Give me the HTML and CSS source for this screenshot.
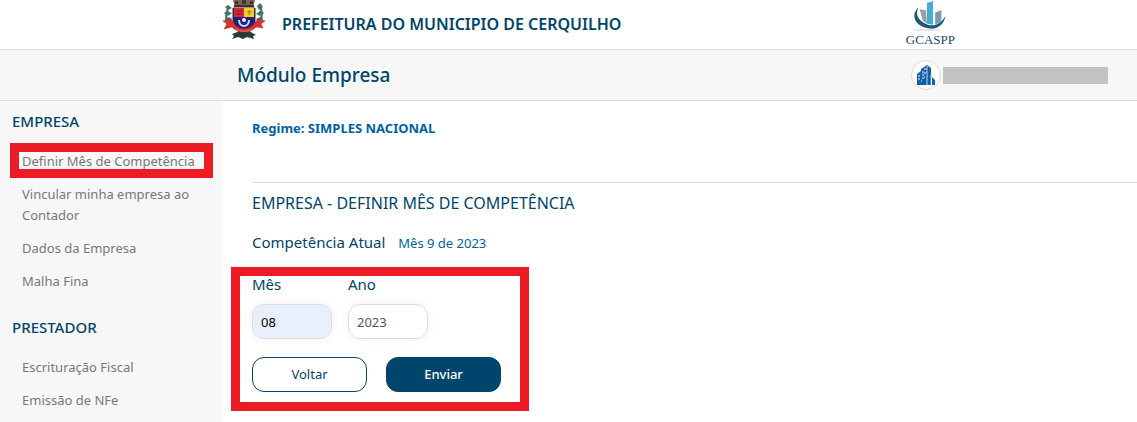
FILE: index.html
```html
<!DOCTYPE html>
<html lang="pt-BR">
<head>
  <meta charset="UTF-8">
  <meta name="viewport" content="width=device-width, initial-scale=1">
  <title>Módulo Empresa</title>
  <link rel="stylesheet" href="styles.css">
</head>
<body>

  <header class="topo">
    <div class="prefeitura">
      <svg class="brasao" viewBox="0 0 44 40" aria-hidden="true">
        <path d="M11 0h22l-2 7H13z" fill="#77664f"/>
        <path d="M13 1h3v3h-3zM20 0h4v4h-4zM28 1h3v3h-3z" fill="#40352e"/>
        <path d="M12 6h20" stroke="#3b302b" stroke-width="2"/>
        <path d="M6 25C3 18 4 13 7 6M37 25c4-7 3-13 1-21" fill="none" stroke="#3d765f" stroke-width="2"/>
        <path d="M6 5l4 3-4 2-3-3zM5 11l5 2-4 3-4-3zM4 17l6 1-4 4-3-2zM38 3l3 4-4 3-2-4zM39 10l3 3-4 3-4-2zM40 16l1 4-4 3-3-4z" fill="#407963"/>
        <path d="M10 34l8-3 4 3 5-3 7 4-3 1 1 3-7-2-4 2-5-2-6 2 2-3z" fill="#263d37"/>
        <path d="M11 8h22v13c0 7-5 11-11 13-6-2-11-6-11-13z" fill="#242078" stroke="#352c42"/>
        <path d="M12 8h10v9H12z" fill="#d92935"/>
        <path d="M22 8h10v9H22z" fill="#f2cf25"/>
        <path d="M14 11h6M14 14h6" stroke="#7b1b2d"/>
        <path d="M27 10v5M25 12h5" stroke="#a47724"/>
        <path d="M17 20c0 8 10 8 10 0" fill="none" stroke="#d5d2ed" stroke-width="2"/>
        <circle cx="22" cy="20" r="2" fill="#eeeeff"/>
        <path d="M1 21l8-2 4 6c5 5 13 5 18 0l5-6 7 2-4 3 2 4-7-1c-6 7-18 7-24 0l-8 2 3-5z" fill="#d53232" stroke="#a72f30" stroke-width=".5"/>
        <path d="M14 29c5 3 11 3 16 0" fill="none" stroke="#f0b8a5" stroke-dasharray="1 1"/>
      </svg>
      <strong class="nome">PREFEITURA DO MUNICIPIO DE CERQUILHO</strong>
    </div>
    <div class="gcaspp">
      <svg class="gcaspp-logo" viewBox="0 0 34 31" aria-hidden="true">
        <ellipse cx="15" cy="29" rx="14" ry="1" fill="#e2e4e5"/>
        <path d="M7 9l6 1 1 13-4-3z" fill="#9b9fa3"/>
        <path d="M14 3l6-2v23l-6-1z" fill="#48add0"/>
        <path d="M22 12l6-2v11l-6 3z" fill="#7e9bac"/>
        <path d="M6 7C-2 14 2 24 13 27c10 3 18-3 19-12-3 7-10 11-17 9C6 21 2 14 6 7z" fill="#155878"/>
      </svg>
      <span>GCASPP</span>
    </div>
  </header>

  <div class="barra">
    <h1>Módulo Empresa</h1>
    <div class="usuario">
      <span class="avatar">
        <svg viewBox="0 0 18 20" aria-hidden="true">
          <path d="M0 20V9l4-3V4l6-4 4 3v17h1v-8l3 3v5z" fill="#1261a8"/>
          <path d="M10 1v19" stroke="#b9d3eb"/>
          <path d="M1 11h2M1 14h2M5 7h2M5 10h2M5 13h2M4 16h1M7 4h2M7 8h2M7 12h1" stroke="#ffffff"/>
          <path d="M14 9v11" stroke="#ffffff" stroke-width=".5"/>
        </svg>
      </span>
      <span class="usuario-nome"></span>
    </div>
  </div>

  <div class="pagina">
    <nav class="menu">
      <h2>EMPRESA</h2>
      <ul>
        <li class="destacado"><a href="#">Definir Mês de Competência</a></li>
        <li><a href="#">Vincular minha empresa ao Contador</a></li>
        <li><a href="#">Dados da Empresa</a></li>
        <li><a href="#">Malha Fina</a></li>
      </ul>
      <h2>PRESTADOR</h2>
      <ul>
        <li><a href="#">Escrituração Fiscal</a></li>
        <li><a href="#">Emissão de NFe</a></li>
      </ul>
    </nav>

    <main class="conteudo">
      <p class="regime">Regime: SIMPLES NACIONAL</p>
      <h2>EMPRESA - DEFINIR MÊS DE COMPETÊNCIA</h2>
      <p class="atual">Competência Atual <span>Mês 9 de 2023</span></p>

      <form class="competencia">
        <div class="campos">
          <div class="campo">
            <label for="mes">Mês</label>
            <input class="preenchido" type="text" id="mes" name="mes" value="08">
          </div>
          <div class="campo">
            <label for="ano">Ano</label>
            <input type="text" id="ano" name="ano" value="2023">
          </div>
        </div>
        <div class="botoes">
          <button type="button">Voltar</button>
          <button type="submit" class="enviar">Enviar</button>
        </div>
      </form>
    </main>
  </div>

</body>
</html>
```

FILE: styles.css
```css
* {
  box-sizing: border-box;
}
body {
  display: flex;
  flex-direction: column;
  min-height: 100vh;
  margin: 0;
  font-family: "Segoe UI", "Noto Sans", "Open Sans", sans-serif;
  font-size: 13px;
  line-height: 21px;
  color: #00456b;
  background: #fff;
}
h1, h2, p, ul {
  margin: 0;
  padding: 0;
}

/* Topo */
.topo {
  display: flex;
  justify-content: space-between;
  height: 50px;
  padding: 0 182px 0 222px;
  border-bottom: 1px solid #ddd;
}
.prefeitura {
  display: flex;
  gap: 16px;
}
.brasao {
  width: 44px;
  height: 40px;
}
.nome {
  font-size: 16px;
  font-weight: 600;
  line-height: 48px;
}
.gcaspp {
  display: flex;
  flex-direction: column;
  align-items: center;
  font-family: "Liberation Serif", serif;
  font-size: 13px;
  line-height: 16px;
  color: #1b4969;
}
.gcaspp-logo {
  width: 36px;
  height: 32px;
}
.barra {
  display: flex;
  align-items: center;
  justify-content: space-between;
  height: 51px;
  padding: 0 29px 0 237px;
  background: #f7f7f7;
  border-bottom: 1px solid #ddd;
}
.barra h1 {
  font-size: 19px;
  font-weight: 500;
}
.usuario {
  display: flex;
  align-items: center;
  gap: 2px;
}
.avatar {
  display: flex;
  align-items: center;
  justify-content: center;
  width: 30px;
  height: 30px;
  border: 1px solid #ddd;
  border-radius: 50%;
  background: #fff;
}
.avatar svg {
  width: 18px;
  height: 20px;
}
.usuario-nome {
  width: 165px;
  height: 17px;
  background: #c3c3c3;
}

/* Menu lateral */
.pagina {
  display: flex;
  flex: 1;
}
.menu {
  flex: 0 0 222px;
  padding: 8px 9px 0 12px;
  background: #f7f7f7;
}
.menu h2 {
  margin-bottom: 12px;
  font-size: 15px;
  font-weight: 500;
  line-height: 24px;
}
.menu ul {
  margin-bottom: 17px;
  list-style: none;
}
.menu ul:last-child {
  margin-bottom: 0;
}
.menu a {
  display: block;
  padding: 6px 10px;
  color: #777;
  text-decoration: none;
}
.destacado {
  position: relative;
}
.destacado::after,
.competencia::after {
  content: "";
  position: absolute;
  border: 9px solid #ed1c24;
  pointer-events: none;
}
.destacado::after {
  inset: -2px 0 0 -2px;
}

/* Conteudo */
.conteudo {
  flex: 1;
  padding: 17px 0 10px 30px;
}
.regime {
  padding-bottom: 43px;
  border-bottom: 1px solid #ddd;
  font-weight: 700;
  color: #0062a3;
}
.conteudo h2 {
  margin: 8px 0 15px;
  font-size: 16px;
  font-weight: 400;
  line-height: 24px;
}
.atual {
  font-size: 15px;
  line-height: 24px;
}
.atual span {
  margin-left: 9px;
  font-size: 13px;
  color: #0062a3;
}
.competencia {
  position: relative;
  width: 249px;
  margin-top: 17px;
}
.competencia::after {
  inset: -5px -28px -19px -21px;
}
.campos {
  display: flex;
  gap: 16px;
}
.campo label {
  display: block;
  margin-bottom: 8px;
  font-size: 15px;
  line-height: 24px;
}
.campo input {
  display: block;
  width: 80px;
  height: 35px;
  padding: 0 8px;
  border: 1px solid #ddd;
  border-radius: 12px;
  background: #fff;
  box-shadow: 0 0 10px #f0f0f0;
  font: inherit;
  color: #555;
}
.campo .preenchido {
  background: #e8f0fe;
  color: #000;
}
.botoes {
  display: flex;
  gap: 19px;
  margin-top: 18px;
}
.botoes button {
  flex: 1;
  height: 35px;
  border: 1px solid #00456b;
  border-radius: 12px;
  background: #fff;
  font: inherit;
  color: #00456b;
  cursor: pointer;
}
.botoes .enviar {
  background: #00456b;
  font-weight: 500;
  color: #fff;
}
```
